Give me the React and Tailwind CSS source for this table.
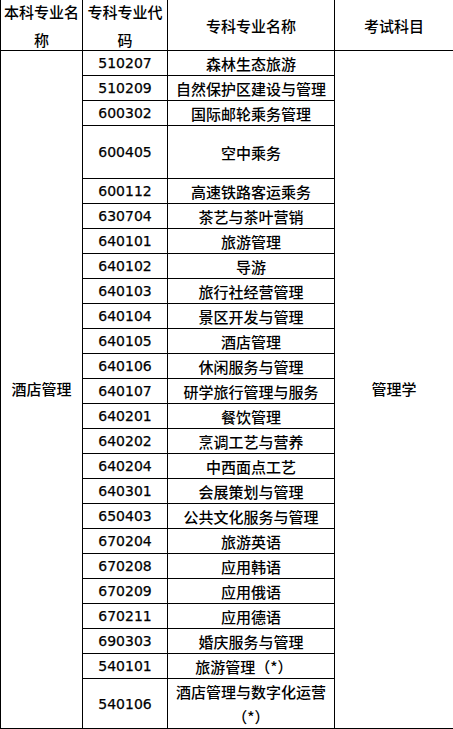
import React from "react";

const rows = [
  ["510207", "森林生态旅游"],
  ["510209", "自然保护区建设与管理"],
  ["600302", "国际邮轮乘务管理"],
  ["600405", "空中乘务"],
  ["600112", "高速铁路客运乘务"],
  ["630704", "茶艺与茶叶营销"],
  ["640101", "旅游管理"],
  ["640102", "导游"],
  ["640103", "旅行社经营管理"],
  ["640104", "景区开发与管理"],
  ["640105", "酒店管理"],
  ["640106", "休闲服务与管理"],
  ["640107", "研学旅行管理与服务"],
  ["640201", "餐饮管理"],
  ["640202", "烹调工艺与营养"],
  ["640204", "中西面点工艺"],
  ["640301", "会展策划与管理"],
  ["650403", "公共文化服务与管理"],
  ["670204", "旅游英语"],
  ["670208", "应用韩语"],
  ["670209", "应用俄语"],
  ["670211", "应用德语"],
  ["690303", "婚庆服务与管理"],
  ["540101", "旅游管理（*）"],
  ["540106", "酒店管理与数字化运营（*）"],
];

const cell =
  "border-r border-b border-black flex items-center justify-center text-center";

export default function App() {
  return (
    <div
      className="w-[453px] h-[729px] bg-white text-black overflow-hidden"
      style={{ fontFamily: '"Noto Sans CJK SC", "Noto Sans", sans-serif' }}
    >
      <div className="grid grid-cols-[82px_85px_167px_119px] grid-rows-[51px_25px_25px_25px_53px_repeat(20,25px)_50px] border-l border-black text-[15px] font-medium">
        <div className={`${cell} leading-[28px] items-start`}>
          <span className="block w-full -mt-[2px]">本科专业名称</span>
        </div>
        <div className={`${cell} leading-[28px] items-start px-[3px]`}>
          <span className="block w-full -mt-[2px]">专科专业代码</span>
        </div>
        <div className={`${cell} leading-[25px]`}>专科专业名称</div>
        <div className={`${cell} leading-[25px]`}>考试科目</div>

        <div className={`${cell} col-start-1 row-[2/27]`}>酒店管理</div>
        <div className={`${cell} col-start-4 row-[2/27]`}>管理学</div>

        {rows.map(([code, name], i) => (
          <React.Fragment key={code}>
            <div
              className={`${cell} leading-[24px] text-[14px] font-normal`}
              style={{ fontFamily: '"DejaVu Sans", sans-serif', WebkitTextStroke: "0.25px black" }}
            >
              {code}
            </div>
            <div
              className={`${cell} leading-[25px] px-[2px] ${i === 23 ? "pr-[16px]" : ""}`}
            >
              {name}
            </div>
          </React.Fragment>
        ))}
      </div>
    </div>
  );
}
